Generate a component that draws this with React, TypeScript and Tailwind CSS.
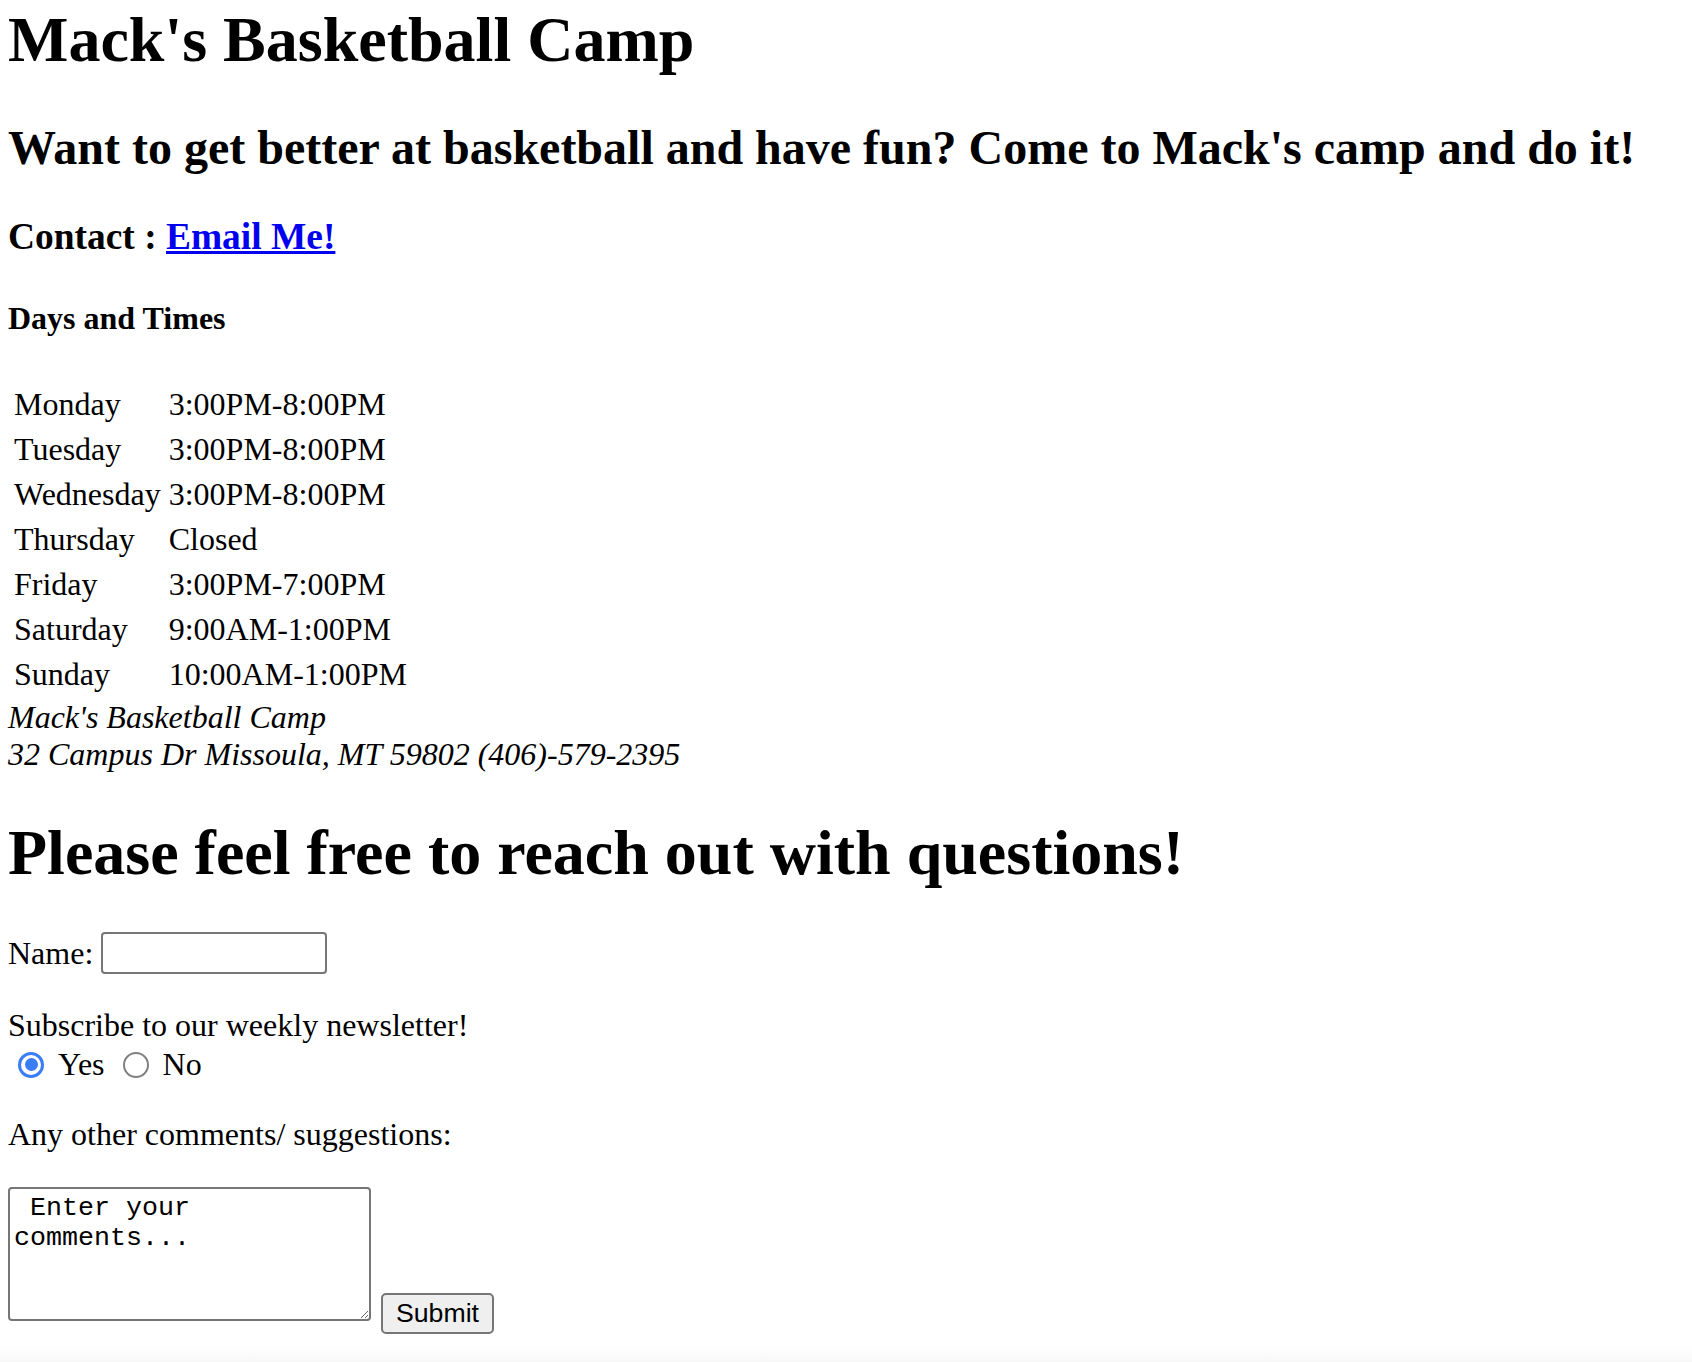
export default function App() {
  const hours = [
    ["Monday", "3:00PM-8:00PM"],
    ["Tuesday", "3:00PM-8:00PM"],
    ["Wednesday", "3:00PM-8:00PM"],
    ["Thursday", "Closed"],
    ["Friday", "3:00PM-7:00PM"],
    ["Saturday", "9:00AM-1:00PM"],
    ["Sunday", "10:00AM-1:00PM"],
  ];

  return (
    <div className="min-h-screen bg-white text-black pl-[8px] pt-[3px] font-['Liberation_Serif','Times_New_Roman',serif] text-[32px] leading-[normal]">
      <h1 className="text-[64px] font-bold">Mack's Basketball Camp</h1>

      <h2 className="mt-[43px] text-[48px] font-bold">
        Want to get better at basketball and have fun? Come to Mack's camp and do it!
      </h2>

      <h3 className="mt-[40px] text-[37.44px] font-bold">
        Contact :{" "}
        <a href="#" className="text-[#0000ee] underline">
          Email Me!
        </a>
      </h3>

      <h4 className="mt-[42px] text-[32px] font-bold">Days and Times</h4>

      {/* Schedule */}
      <table className="mt-[43px] border-separate border-spacing-[4px]">
        <tbody>
          {hours.map(([day, time]) => (
            <tr key={day}>
              <td className="p-[2px] text-left">{day}</td>
              <td className="p-[2px] text-left">{time}</td>
            </tr>
          ))}
        </tbody>
      </table>

      <address className="italic">
        Mack's Basketball Camp
        <br />
        32 Campus Dr Missoula, MT 59802 (406)-579-2395
      </address>

      <h1 className="mt-[43px] text-[64px] font-bold">Please feel free to reach out with questions!</h1>

      <form onSubmit={(e) => e.preventDefault()}>
        <div className="mt-[42px] flex items-center">
          <label>Name:</label>
          <input
            type="text"
            className="ml-[8px] w-[226px] h-[42px] border-2 border-[#767676] rounded-[4px] bg-white"
          />
        </div>

        <div className="mt-[33px]">Subscribe to our weekly newsletter!</div>

        <div className="mt-[2px] flex items-center h-[37px]">
          <span className="ml-[10px] w-[26px] h-[26px] rounded-full border-[3px] border-[#3b7df6] bg-white flex items-center justify-center">
            <span className="w-[13px] h-[13px] rounded-full bg-[#3b7df6]" />
          </span>
          <span className="ml-[14px]">Yes</span>
          <span className="ml-[18px] w-[26px] h-[26px] rounded-full border-2 border-[#808080] bg-white" />
          <span className="ml-[14px]">No</span>
        </div>

        <div className="mt-[33px]">Any other comments/ suggestions:</div>

        <div className="mt-[34px] flex items-start">
          <textarea
            defaultValue=" Enter your comments..."
            className="w-[363px] h-[134px] resize border-2 border-[#767676] rounded-[4px] bg-white p-[4px] font-['Liberation_Mono','Courier_New',monospace] text-[26.67px] leading-[normal] text-black"
          />
          <button
            type="submit"
            className="ml-[10px] mt-[106px] w-[113px] h-[41px] border-2 border-[#767676] rounded-[5px] bg-[#efefef] font-['Liberation_Sans',Arial,sans-serif] text-[26.67px] leading-[normal] text-black"
          >
            Submit
          </button>
        </div>
      </form>

      <div className="-ml-[8px] mt-[12px] h-[20px] bg-gradient-to-b from-white to-[#f6f6f6]" />
    </div>
  );
}
